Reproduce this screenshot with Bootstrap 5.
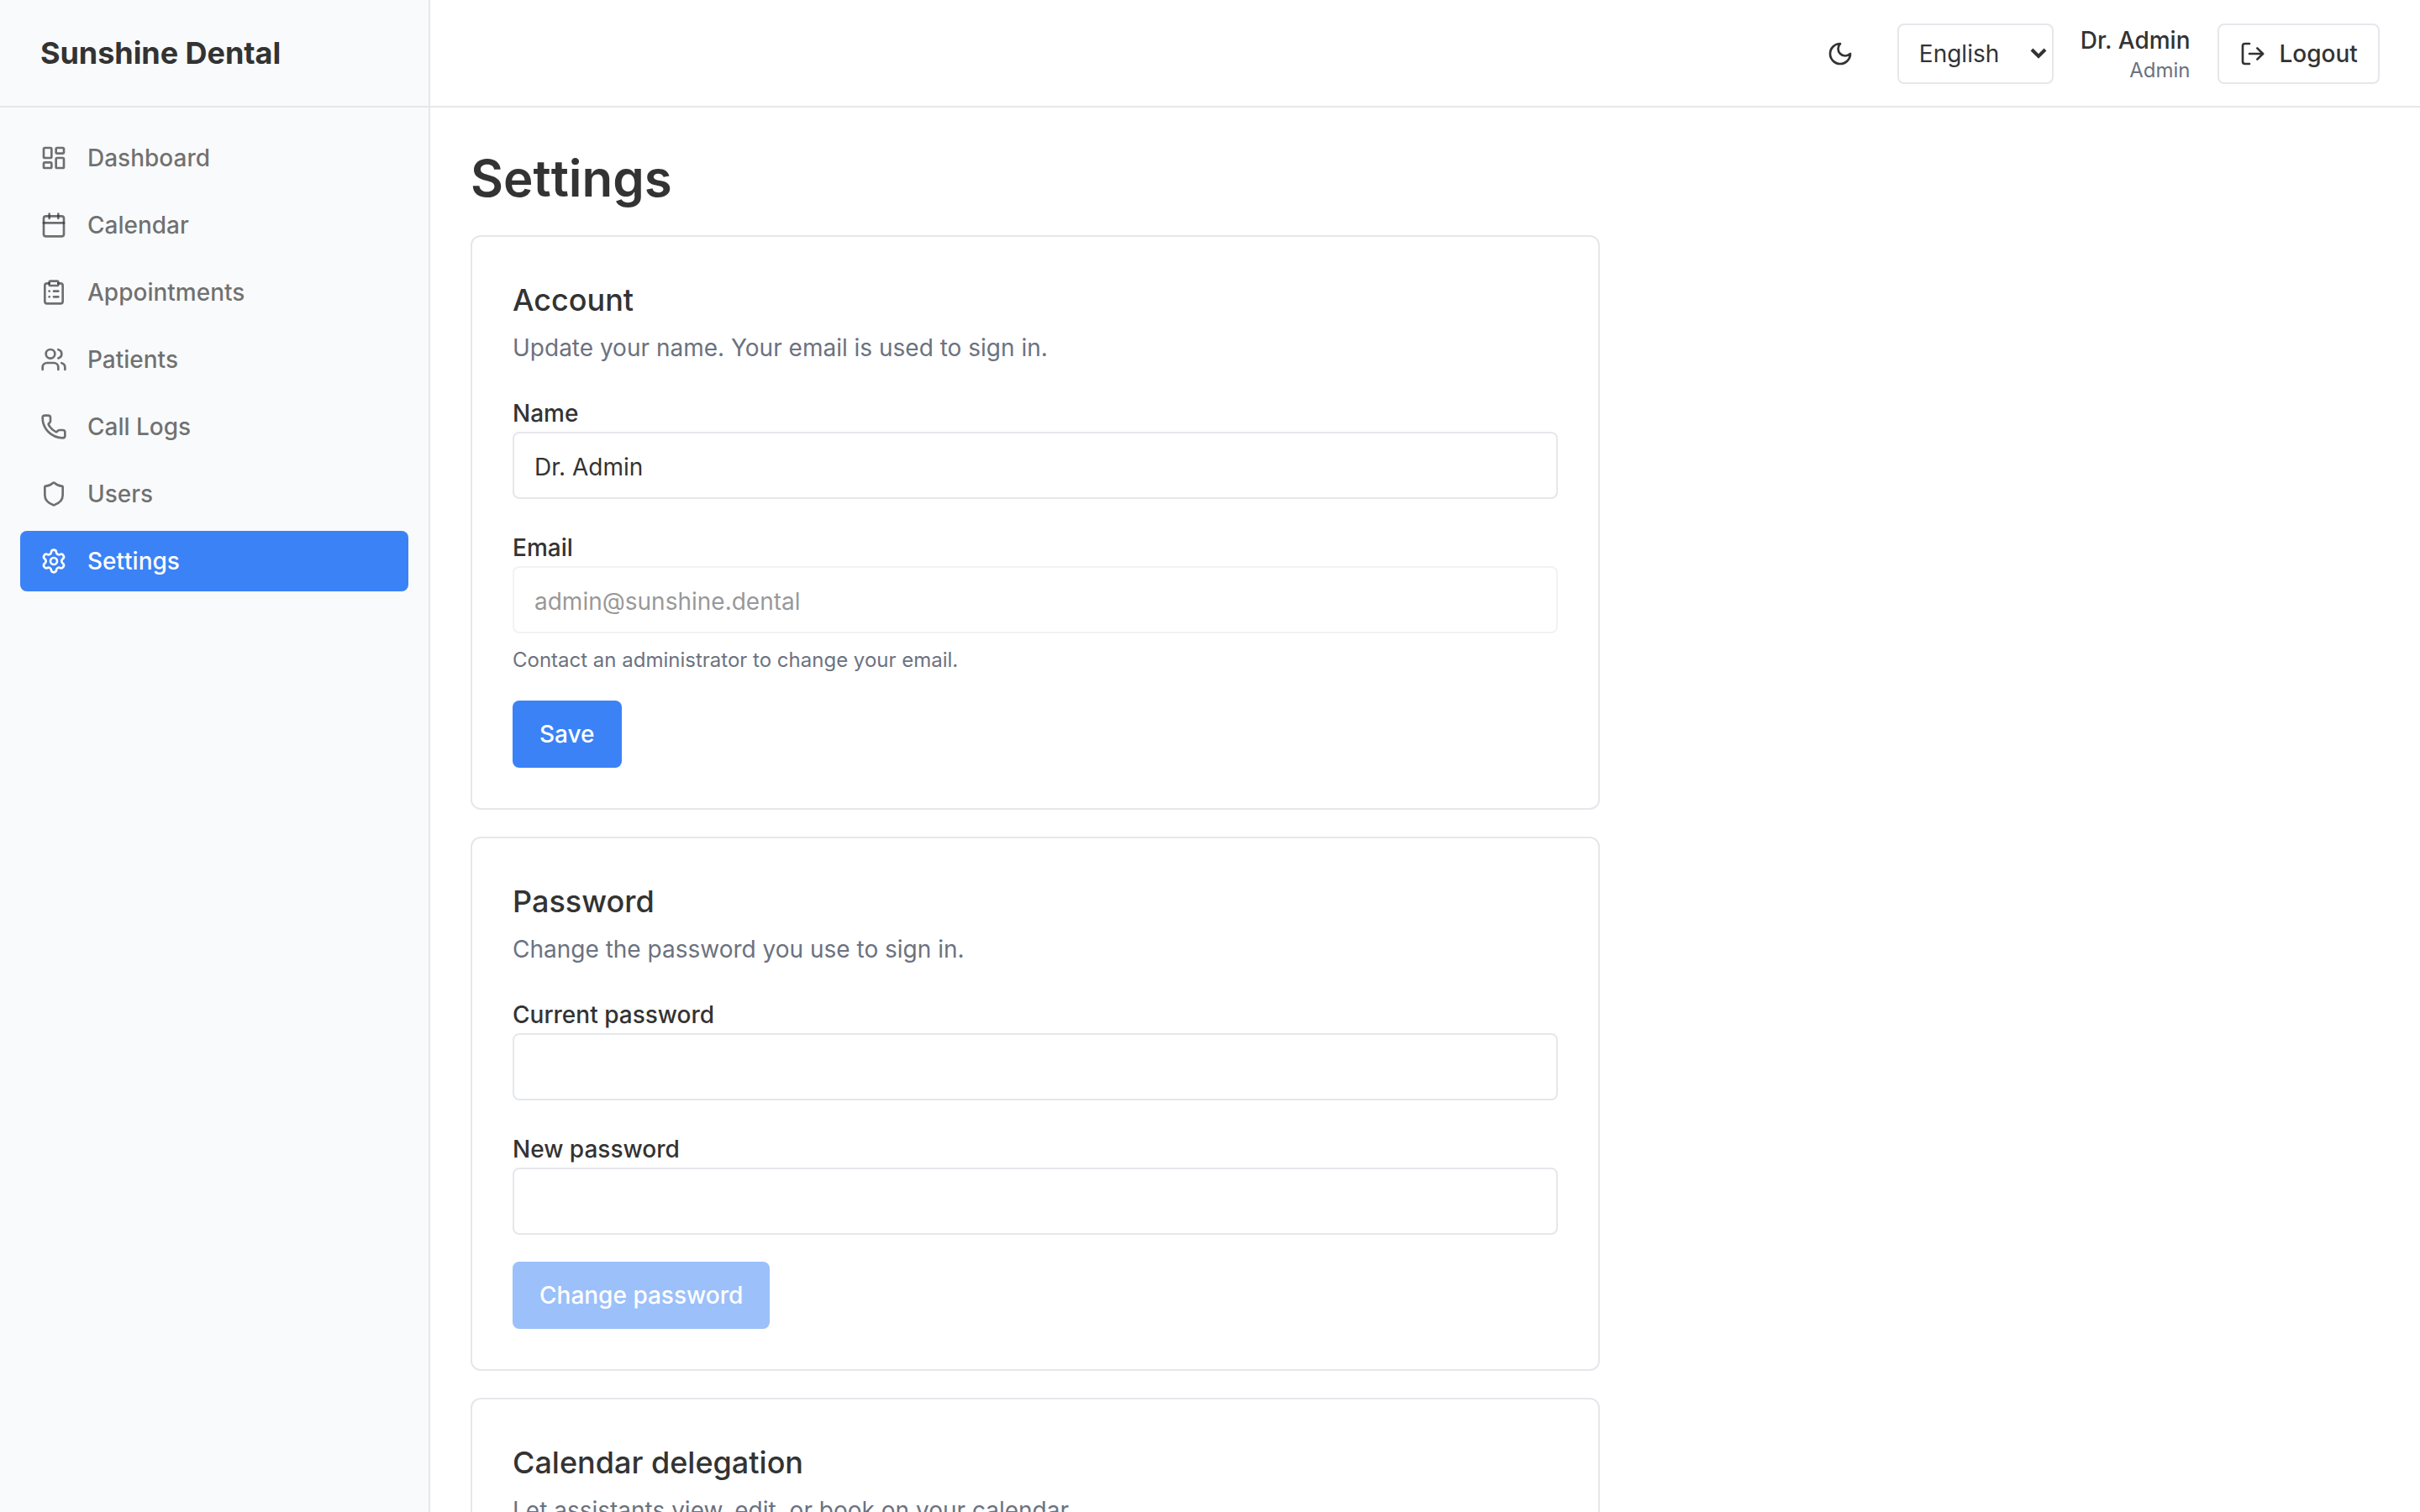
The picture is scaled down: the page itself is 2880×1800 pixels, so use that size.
<!DOCTYPE html>
<html lang="en">
<head>
  <meta charset="UTF-8" />
  <meta name="viewport" content="width=device-width, initial-scale=1.0"/>
  <title>Settings - Sunshine Dental</title>
  <link href="https://cdn.jsdelivr.net/npm/bootstrap@5.3.2/dist/css/bootstrap.min.css" rel="stylesheet">
  <style>
    body {
      font-family: Inter, "Liberation Sans", sans-serif;
      font-size: 28px;
      line-height: 40px;
      color: #333;
      background-color: #fff;
    }

    .app-icon {
      width: 32px;
      height: 32px;
      flex-shrink: 0;
      fill: none;
      stroke: currentColor;
      stroke-width: 2;
      stroke-linecap: round;
      stroke-linejoin: round;
    }

    /* Sidebar */
    .sidebar {
      width: 512px;
      background-color: #f9fafb;
      border-right: 2px solid #e5e7eb;
    }

    .sidebar-brand {
      height: 128px;
      padding: 0 48px;
      border-bottom: 2px solid #e5e7eb;
      font-size: 36px;
      font-weight: 700;
      letter-spacing: -0.06px;
    }

    .sidebar-nav {
      gap: 8px;
      padding: 24px;
    }

    .sidebar-nav .nav-link {
      gap: 24px;
      height: 72px;
      padding: 0 24px;
      border-radius: 8px;
      font-weight: 500;
      color: rgba(51, 51, 51, 0.7);
    }

    .sidebar-nav .nav-link.active {
      background-color: #3b82f6;
      color: #fff;
      font-kerning: none;
    }

    /* Top bar */
    .topbar {
      height: 128px;
      gap: 32px;
      padding: 2px 48px 0;
      border-bottom: 2px solid #e5e7eb;
    }

    .topbar .btn {
      height: 72px;
      font-size: 28px;
      font-weight: 500;
      line-height: 40px;
      color: #333;
      border: 2px solid #e5e7eb;
      border-radius: 8px;
      padding: 0 24px;
      gap: 16px;
    }

    .topbar .theme-btn {
      width: 72px;
      padding: 0;
      border-color: transparent;
    }

    .topbar .logout-btn {
      width: 193.5px;
    }

    .topbar .form-select {
      width: 186px;
      height: 72px;
      padding: 0 48px 0 24px;
      font-size: 28px;
      line-height: 40px;
      color: #333;
      border: 2px solid #e5e7eb;
      border-radius: 8px;
      background-image: url("data:image/svg+xml,%3csvg xmlns='http://www.w3.org/2000/svg' viewBox='0 0 20 14'%3e%3cpath fill='none' stroke='%23333' stroke-width='4' d='M2 2l8 8 8-8'/%3e%3c/svg%3e");
      background-size: 20px 14px;
      background-position: right 6px center;
    }

    .user-role {
      font-size: 24px;
      line-height: 32px;
      color: #6b7280;
    }

    /* Content */
    .content {
      padding: 48px;
    }

    .page-title {
      font-size: 60px;
      line-height: 72px;
      font-weight: 600;
      font-kerning: none;
      margin-bottom: 32px;
    }

    .settings-list {
      width: 1344px;
      gap: 32px;
    }

    .settings-list .card {
      border: 2px solid #e5e7eb;
      border-radius: 12px;
      color: #333;
    }

    .settings-list .card-body {
      padding: 48px;
    }

    .settings-list .card-title {
      font-size: 36px;
      line-height: 54px;
      font-weight: 500;
      margin-bottom: 10px;
    }

    .settings-list .card-text {
      color: #6b7280;
      margin-bottom: 38px;
    }

    .field + .field {
      margin-top: 38px;
    }

    .field .form-label {
      display: block;
      font-size: 28px;
      font-weight: 500;
      margin-bottom: 2px;
    }

    .field .form-control {
      height: 80px;
      padding: 4px 24px 0;
      font-size: 28px;
      line-height: 40px;
      color: #333;
      border: 2px solid #e5e7eb;
      border-radius: 8px;
      background-color: #fff;
    }

    .field .form-control:disabled {
      opacity: 0.5;
    }

    .field .form-text {
      font-size: 24px;
      line-height: 32px;
      color: #6b7280;
      margin-top: 16px;
    }

    .settings-list .btn-primary {
      height: 80px;
      margin-top: 32px;
      padding: 0 32px;
      font-size: 28px;
      line-height: 40px;
      font-weight: 500;
      border: 0;
      border-radius: 8px;
      background-color: #3b82f6;
    }

    .settings-list .btn-primary:disabled {
      opacity: 0.5;
    }
  </style>
</head>
<body>
  <div class="d-flex vh-100 overflow-hidden">
    <aside class="sidebar d-flex flex-column flex-shrink-0">
      <div class="sidebar-brand d-flex align-items-center">Sunshine Dental</div>
      <nav class="sidebar-nav nav flex-column">
        <a class="nav-link d-flex align-items-center" href="#">
          <svg class="app-icon" viewBox="0 0 24 24"><rect width="7" height="9" x="3" y="3" rx="1"/><rect width="7" height="5" x="14" y="3" rx="1"/><rect width="7" height="9" x="14" y="12" rx="1"/><rect width="7" height="5" x="3" y="16" rx="1"/></svg>
          Dashboard
        </a>
        <a class="nav-link d-flex align-items-center" href="#">
          <svg class="app-icon" viewBox="0 0 24 24"><path d="M8 2v4"/><path d="M16 2v4"/><rect width="18" height="18" x="3" y="4" rx="2"/><path d="M3 10h18"/></svg>
          Calendar
        </a>
        <a class="nav-link d-flex align-items-center" href="#">
          <svg class="app-icon" viewBox="0 0 24 24"><rect width="8" height="4" x="8" y="2" rx="1" ry="1"/><path d="M16 4h2a2 2 0 0 1 2 2v14a2 2 0 0 1-2 2H6a2 2 0 0 1-2-2V6a2 2 0 0 1 2-2h2"/><path d="M12 11h4"/><path d="M12 16h4"/><path d="M8 11h.01"/><path d="M8 16h.01"/></svg>
          Appointments
        </a>
        <a class="nav-link d-flex align-items-center" href="#">
          <svg class="app-icon" viewBox="0 0 24 24"><path d="M16 21v-2a4 4 0 0 0-4-4H6a4 4 0 0 0-4 4v2"/><path d="M16 3.128a4 4 0 0 1 0 7.744"/><path d="M22 21v-2a4 4 0 0 0-3-3.87"/><circle cx="9" cy="7" r="4"/></svg>
          Patients
        </a>
        <a class="nav-link d-flex align-items-center" href="#">
          <svg class="app-icon" viewBox="0 0 24 24"><path d="M13.832 16.568a1 1 0 0 0 1.213-.303l.355-.465A2 2 0 0 1 17 15h3a2 2 0 0 1 2 2v3a2 2 0 0 1-2 2A18 18 0 0 1 2 4a2 2 0 0 1 2-2h3a2 2 0 0 1 2 2v3a2 2 0 0 1-.8 1.6l-.468.351a1 1 0 0 0-.292 1.233 14 14 0 0 0 6.392 6.384"/></svg>
          Call Logs
        </a>
        <a class="nav-link d-flex align-items-center" href="#">
          <svg class="app-icon" viewBox="0 0 24 24"><path d="M20 13c0 5-3.5 7.5-7.66 8.95a1 1 0 0 1-.67-.01C7.5 20.5 4 18 4 13V6a1 1 0 0 1 1-1c2 0 4.5-1.2 6.24-2.72a1.17 1.17 0 0 1 1.52 0C14.51 3.81 17 5 19 5a1 1 0 0 1 1 1z"/></svg>
          Users
        </a>
        <a class="nav-link active d-flex align-items-center" href="#">
          <svg class="app-icon" viewBox="0 0 24 24"><path d="M9.671 4.136a2.34 2.34 0 0 1 4.659 0 2.34 2.34 0 0 0 3.319 1.915 2.34 2.34 0 0 1 2.33 4.033 2.34 2.34 0 0 0 0 3.831 2.34 2.34 0 0 1-2.33 4.033 2.34 2.34 0 0 0-3.319 1.915 2.34 2.34 0 0 1-4.659 0 2.34 2.34 0 0 0-3.32-1.915 2.34 2.34 0 0 1-2.33-4.033 2.34 2.34 0 0 0 0-3.831A2.34 2.34 0 0 1 6.35 6.051a2.34 2.34 0 0 0 3.319-1.915"/><circle cx="12" cy="12" r="3"/></svg>
          Settings
        </a>
      </nav>
    </aside>

    <div class="flex-grow-1">
      <header class="topbar d-flex align-items-center justify-content-end">
        <button type="button" class="btn theme-btn d-flex align-items-center justify-content-center" aria-label="Toggle theme">
          <svg class="app-icon" viewBox="0 0 24 24"><path d="M12 3a6 6 0 0 0 9 9 9 9 0 1 1-9-9Z"/></svg>
        </button>
        <select class="form-select" aria-label="Language">
          <option selected>English</option>
        </select>
        <div class="text-end">
          <div class="fw-medium user-name">Dr. Admin</div>
          <div class="user-role">Admin</div>
        </div>
        <button type="button" class="btn logout-btn d-flex align-items-center">
          <svg class="app-icon" viewBox="0 0 24 24"><path d="m16 17 5-5-5-5"/><path d="M21 12H9"/><path d="M9 21H5a2 2 0 0 1-2-2V5a2 2 0 0 1 2-2h4"/></svg>
          Logout
        </button>
      </header>

      <main class="content">
        <h1 class="page-title">Settings</h1>
        <div class="settings-list d-flex flex-column">
          <section class="card">
            <div class="card-body">
              <h2 class="card-title">Account</h2>
              <p class="card-text">Update your name. Your email is used to sign in.</p>
              <form>
                <div class="field">
                  <label for="name" class="form-label">Name</label>
                  <input type="text" class="form-control" id="name" value="Dr. Admin">
                </div>
                <div class="field">
                  <label for="email" class="form-label">Email</label>
                  <input type="email" class="form-control" id="email" value="admin@sunshine.dental" disabled>
                  <div class="form-text">Contact an administrator to change your email.</div>
                </div>
                <button type="submit" class="btn btn-primary">Save</button>
              </form>
            </div>
          </section>

          <section class="card">
            <div class="card-body">
              <h2 class="card-title">Password</h2>
              <p class="card-text">Change the password you use to sign in.</p>
              <form>
                <div class="field">
                  <label for="current-password" class="form-label">Current password</label>
                  <input type="password" class="form-control" id="current-password">
                </div>
                <div class="field">
                  <label for="new-password" class="form-label">New password</label>
                  <input type="password" class="form-control" id="new-password">
                </div>
                <button type="submit" class="btn btn-primary" disabled>Change password</button>
              </form>
            </div>
          </section>

          <section class="card">
            <div class="card-body">
              <h2 class="card-title">Calendar delegation</h2>
              <p class="card-text">Let assistants view, edit, or book on your calendar.</p>
            </div>
          </section>
        </div>
      </main>
    </div>
  </div>
  <script src="https://cdn.jsdelivr.net/npm/bootstrap@5.3.2/dist/js/bootstrap.bundle.min.js"></script>
</body>
</html>
